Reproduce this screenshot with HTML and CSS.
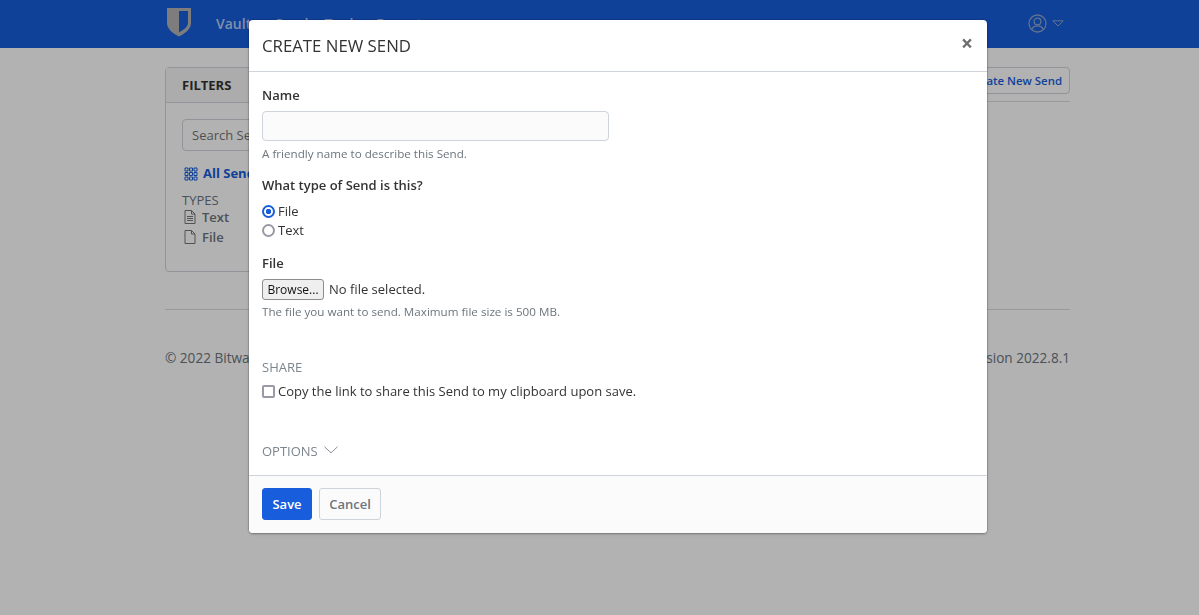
FILE: index.html
```html
<!DOCTYPE html>
<html lang="en">
<head>
    <meta charset="UTF-8">
    <title>Create New Send</title>
    <link rel="stylesheet" href="styles.css">
</head>
<body>
    <nav class="navbar">
        <div class="navbar-inner">
            <svg class="logo" width="26" height="30" viewBox="0 0 26 30">
                <path fill-rule="evenodd" fill="#b3b3b3" d="M1 1h24v15c0 6-6 10.500-12 13.500C7 26.500 1 22 1 16zM13 4v21.500c4-2.300 9-5.500 9-9.500V4z"/>
            </svg>
            <a class="nav-link">Vault</a>
            <a class="nav-link">Send</a>
            <a class="nav-link">Tools</a>
            <a class="nav-link">Reports</a>
            <div class="nav-user">
                <svg width="19" height="19" viewBox="0 0 19 19" fill="none" stroke="#8fa3cb" stroke-width="1.300">
                    <circle cx="9.500" cy="9.500" r="8.500"/>
                    <circle cx="9.500" cy="7.500" r="3.400"/>
                    <path d="M3.500 15.500c1.300-2.600 3.500-3.700 6-3.700s4.700 1.100 6 3.700"/>
                </svg>
                <svg width="12" height="7" viewBox="0 0 12 7" fill="none" stroke="#8fa3cb" stroke-width="1">
                    <path d="M.8.800h10.400L6 6z"/>
                </svg>
            </div>
        </div>
    </nav>

    <div class="container">
        <div class="page-row">
            <aside class="card">
                <div class="card-header">FILTERS</div>
                <div class="card-body">
                    <input class="search" type="text" placeholder="Search Sends">
                    <a class="all-sends">
                        <svg width="14" height="14" viewBox="0 0 14 14" fill="none" stroke="#175ddc">
                            <path d="M1 1h3v3H1zM5.500 1h3v3h-3zM10 1h3v3h-3zM1 5.500h3v3H1zM5.500 5.500h3v3h-3zM10 5.500h3v3h-3zM1 10h3v3H1zM5.500 10h3v3h-3zM10 10h3v3h-3z"/>
                        </svg>
                        All Sends
                    </a>
                    <div class="types-title">TYPES</div>
                    <a class="type-item">
                        <svg width="12" height="14" viewBox="0 0 12 14" fill="none" stroke="#777" stroke-width="1">
                            <path d="M1 .5h6.500L11 4v9.500H1zM7.500.5V4H11M3 6.500h6M3 8.500h6M3 10.500h6"/>
                        </svg>
                        Text
                    </a>
                    <a class="type-item">
                        <svg width="12" height="14" viewBox="0 0 12 14" fill="none" stroke="#777" stroke-width="1">
                            <path d="M1 .5h6.500L11 4v9.500H1zM7.500.5V4H11"/>
                        </svg>
                        File
                    </a>
                </div>
            </aside>
            <main class="main-col">
                <div class="page-header">
                    <button class="btn-create" type="button">Create New Send</button>
                </div>
            </main>
        </div>
        <footer class="footer">
            <span>© 2022 Bitwarden Inc.</span>
            <span>Version 2022.8.1</span>
        </footer>
    </div>

    <div class="backdrop"></div>

    <div class="modal">
        <div class="modal-header">
            <h1>CREATE NEW SEND</h1>
            <span class="close">×</span>
        </div>
        <form class="modal-body">
            <label class="field-label" for="nome">Name</label>
            <input class="name-input" id="nome" type="text">
            <small class="hint">A friendly name to describe this Send.</small>

            <div class="field-label type-label">What type of Send is this?</div>
            <label class="check-row"><input type="radio" name="tipo" checked> File</label>
            <label class="check-row"><input type="radio" name="tipo"> Text</label>

            <div class="field-label file-label">File</div>
            <div class="file-row">
                <button class="browse" type="button">Browse...</button>
                <span>No file selected.</span>
            </div>
            <small class="hint hint-file">The file you want to send. Maximum file size is 500 MB.</small>

            <div class="section-title share-title">SHARE</div>
            <label class="check-row"><input type="checkbox"> Copy the link to share this Send to my clipboard upon save.</label>

            <div class="section-title options-title">
                OPTIONS
                <svg width="14" height="8" viewBox="0 0 14 8" fill="none" stroke="#8a9099" stroke-width="1">
                    <path d="M.5.800 7 6.800 13.500.8"/>
                </svg>
            </div>
        </form>
        <div class="modal-footer">
            <button class="btn-save" type="button">Save</button>
            <button class="btn-cancel" type="button">Cancel</button>
        </div>
    </div>
</body>
</html>
```

FILE: styles.css
```css
/* Geral */
body {
    font-family: "Open Sans", sans-serif;
    font-size: 14px;
    line-height: 21px;
    background-color: #fff;
    color: #333;
    margin: 0;
    height: 615px;
    overflow: hidden;
}

svg {
    display: block;
    flex: none;
}

/* Barra superior */
.navbar {
    background: #175ddc;
    height: 48px;
}

.navbar-inner {
    width: 905px;
    margin-left: 165px;
    height: 48px;
    display: flex;
    align-items: center;
}

.logo {
    margin-left: 1px;
    margin-right: 24px;
    margin-top: -4px;
}

.nav-link {
    color: #b9cef5;
    font-weight: 600;
    margin-right: 16px;
    margin-top: -2px;
}

.nav-link:first-of-type {
    margin-right: 24px;
}

.nav-user {
    margin-left: auto;
    margin-right: 6px;
    display: flex;
    align-items: center;
    gap: 5px;
    margin-top: -2px;
}

/* Conteudo */
.container {
    width: 905px;
    margin-left: 165px;
}

.page-row {
    display: flex;
    gap: 20px;
    padding-top: 19px;
    border-bottom: 1px solid #ddd;
    padding-bottom: 37px;
}

.card {
    width: 225px;
    height: 205px;
    box-sizing: border-box;
    border: 1px solid #ced4da;
    border-radius: 4px;
    flex: none;
}

.card-header {
    background: #f7f7f7;
    border-bottom: 1px solid #ced4da;
    height: 34px;
    line-height: 34px;
    padding-left: 16px;
    font-weight: 700;
    font-size: 13px;
}

.card-body {
    padding: 16px;
}

.search {
    display: block;
    width: 100%;
    box-sizing: border-box;
    height: 32px;
    border: 1px solid #ced4da;
    border-radius: 4px;
    padding: 0 9px;
    font: 13px "Open Sans", sans-serif;
    margin-bottom: 12px;
}

.all-sends {
    display: flex;
    align-items: center;
    gap: 5px;
    padding-left: 2px;
    color: #175ddc;
    font-weight: 700;
    font-size: 13px;
    margin-bottom: 8px;
}

.types-title {
    color: #6c757d;
    font-size: 13px;
    line-height: 16px;
    margin-bottom: -1px;
}

.type-item {
    display: flex;
    align-items: center;
    gap: 6px;
    color: #6c757d;
    font-weight: 600;
    font-size: 13px;
    padding-left: 2px;
    line-height: 20px;
}

.main-col {
    flex: 1;
}

.page-header {
    display: flex;
    justify-content: flex-end;
    border-bottom: 1px solid #ddd;
    height: 34px;
}

.btn-create {
    background: #fff;
    border: 1px solid #ced4da;
    border-radius: 4px;
    color: #175ddc;
    font: 600 11.400px "Open Sans", sans-serif;
    height: 27px;
    padding: 0 7px;
}

.footer {
    display: flex;
    justify-content: space-between;
    padding-top: 38px;
    color: #6c757d;
    font-size: 13.600px;
    line-height: 19px;
}

/* Modal */
.backdrop {
    position: fixed;
    inset: 0;
    background: rgba(0, 0, 0, 0.3);
}

.modal {
    position: fixed;
    left: 249px;
    top: 20px;
    width: 738px;
    height: 513px;
    box-sizing: border-box;
    background: #fff;
    border-radius: 4px;
    display: flex;
    flex-direction: column;
    box-shadow: 0 0 0 1px rgba(0, 0, 0, 0.1), 0 1px 3px rgba(0, 0, 0, 0.3);
}

.modal-header {
    height: 52px;
    box-sizing: border-box;
    border-bottom: 1px solid #ced4da;
    padding: 0 13px;
    display: flex;
    align-items: center;
    justify-content: space-between;
}

.modal-header h1 {
    font-size: 16.800px;
    font-weight: 400;
    margin: 0;
    color: #333;
}

.close {
    font-size: 21px;
    font-weight: 700;
    color: #6e6e6e;
    margin-right: 1px;
    position: relative;
    top: -2px;
}

.modal-body {
    flex: 1;
    padding: 13px 13px 0;
}

.field-label {
    display: block;
    font-weight: 600;
    font-size: 13px;
    line-height: 20px;
}

.name-input {
    display: block;
    width: 347px;
    height: 30px;
    box-sizing: border-box;
    background: #fbfbfb;
    border: 1px solid #ced4da;
    border-radius: 4px;
    margin-top: 6px;
}

.hint {
    display: block;
    font-size: 11.650px;
    line-height: 17px;
    color: #6c757d;
    margin-top: 4px;
}

.hint-file {
    margin-top: 3px;
}

.type-label {
    margin-top: 13px;
    margin-bottom: 7px;
}

.check-row {
    display: flex;
    align-items: center;
    gap: 3px;
    font-size: 13px;
    line-height: 19px;
    color: #333;
}

.check-row input {
    appearance: none;
    margin: 0;
    width: 13px;
    height: 13px;
    box-sizing: border-box;
    background: #fff;
    border: 2px solid #9a9aa6;
    border-radius: 2px;
}

.check-row input[type="radio"] {
    border-radius: 50%;
}

.check-row input[type="radio"]:checked {
    border-color: #175ddc;
    background: radial-gradient(circle, #175ddc 0, #175ddc 2.500px, #fff 3px);
}

.file-label {
    margin-top: 13px;
}

.file-row {
    display: flex;
    align-items: center;
    gap: 5px;
    margin-top: 6px;
    font-size: 13px;
}

.browse {
    width: 62px;
    height: 21px;
    padding: 0;
    background: #efefef;
    border: 1px solid #8d8d8d;
    border-radius: 3px;
    font: 12px "Open Sans", sans-serif;
    color: #111;
}

.section-title {
    color: #7d858d;
    font-size: 13px;
    line-height: 20px;
}

.share-title {
    margin-top: 37px;
    margin-bottom: 5px;
}

.options-title {
    display: flex;
    align-items: center;
    gap: 6px;
    margin-top: 40px;
}

.options-title svg {
    margin-top: -3px;
}

.modal-footer {
    height: 58px;
    box-sizing: border-box;
    background: #fbfbfb;
    border-top: 1px solid #ced4da;
    border-radius: 0 0 4px 4px;
    padding: 12px 13px;
    display: flex;
    gap: 7px;
}

.btn-save,
.btn-cancel {
    height: 32px;
    border-radius: 3px;
    font: 600 13px "Open Sans", sans-serif;
}

.btn-save {
    width: 50px;
    background: #175ddc;
    border: 1px solid #175ddc;
    color: #fff;
}

.btn-cancel {
    width: 62px;
    background: #fbfbfb;
    border: 1px solid #ced4da;
    color: #6c757d;
}
```
